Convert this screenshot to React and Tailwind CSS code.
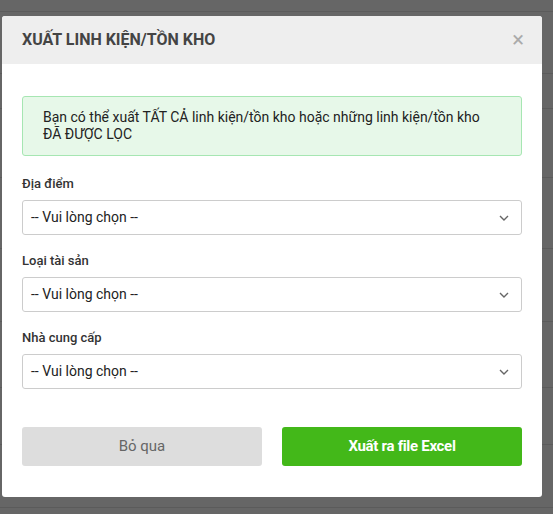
import React from 'react';

const rows = [12, 62, 35, 69, 71, 73, 66, 57, 63, 20];

const Field = ({ label }) => (
  <div className="flex flex-col">
    <label className="text-[13px] font-medium text-[#333] leading-[16px] mb-[8px]">{label}</label>
    <div className="flex h-[35px] items-center justify-between rounded-[3px] border border-[#ccc] bg-white pl-[8px] pr-[12px]">
      <span className="text-[14px] text-[#222]">-- Vui lòng chọn --</span>
      <svg width="10" height="6" viewBox="0 0 10 6" fill="none" stroke="#666" strokeWidth="1.4">
        <path d="M1 1l4 4 4-4" />
      </svg>
    </div>
  </div>
);

const App = () => {
  return (
    <div className="relative h-[514px] w-[553px] overflow-hidden bg-[#666] font-['Roboto',sans-serif]">
      <div className="flex flex-col">
        {rows.map((h, i) => (
          <div key={i} className="border-b border-[#5b5b5b]" style={{ height: h }} />
        ))}
      </div>

      <div className="absolute left-[2px] top-[16px] w-[540px] h-[481px] flex flex-col overflow-hidden rounded-[3px] bg-white">
        <div className="flex h-[48px] items-center justify-between bg-[#eee] pl-[20px] pr-[18px]">
          <h2 className="text-[16px] font-bold text-[#444]">XUẤT LINH KIỆN/TỒN KHO</h2>
          <span className="text-[22px] leading-none text-[#aaa]">×</span>
        </div>

        <div className="flex flex-col px-[20px] pt-[32px]">
          <div className="rounded-[3px] border border-[#a6e6b2] bg-[#e7f8e9] pl-[20px] pr-[32px] py-[12px] text-[14px] leading-[17px] text-[#222]">
            Bạn có thể xuất TẤT CẢ linh kiện/tồn kho hoặc những linh kiện/tồn kho ĐÃ ĐƯỢC LỌC
          </div>

          <div className="mt-[20px] flex flex-col gap-[18px]">
            <Field label="Địa điểm" />
            <Field label="Loại tài sản" />
            <Field label="Nhà cung cấp" />
          </div>

          <div className="mt-[38px] grid grid-cols-2 gap-[20px]">
            <button className="h-[39px] rounded-[3px] bg-[#ddd] text-[15px] text-[#666]">Bỏ qua</button>
            <button className="h-[39px] rounded-[3px] bg-[#43b819] text-[15px] font-bold tracking-[-0.3px] text-white">Xuất ra file Excel</button>
          </div>
        </div>
      </div>
    </div>
  );
};

export default App;
